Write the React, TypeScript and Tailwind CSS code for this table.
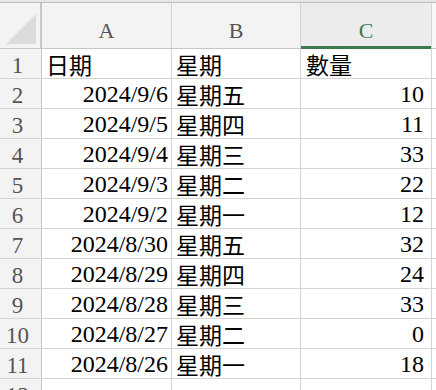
import React from "react";

const rows: [string, string, string][] = [
  ["2024/9/6", "星期五", "10"],
  ["2024/9/5", "星期四", "11"],
  ["2024/9/4", "星期三", "33"],
  ["2024/9/3", "星期二", "22"],
  ["2024/9/2", "星期一", "12"],
  ["2024/8/30", "星期五", "32"],
  ["2024/8/29", "星期四", "24"],
  ["2024/8/28", "星期三", "33"],
  ["2024/8/27", "星期二", "0"],
  ["2024/8/26", "星期一", "18"],
];

const serif = "font-['Liberation_Serif',serif]";
const cjk = "font-['Noto_Sans_CJK_TC',serif]";

function Row({ n, a, b, c, cjkA }: { n: string; a: string; b: string; c: string; cjkA?: boolean }) {
  return (
    <div className="grid grid-cols-[42px_130px_129px_131px_1fr] h-[30px] border-b border-[#d4d4d4]">
      <div className={`${serif} bg-[#f3f3f3] border-r border-[#c6c6c6] flex items-end justify-center pr-[6px] pb-[1px] text-[23px] leading-none text-[#555]`}>
        <span>{n}</span>
      </div>
      <div className={`border-r border-[#d4d4d4] flex items-end leading-none ${cjkA ? "justify-start pl-[4px] pb-[2px]" : "justify-end pr-[3px] pb-[2px]"}`}>
        {cjkA ? <span className={`${cjk} text-[23px] leading-none font-normal`}>{a}</span> : <span className={`${serif} text-[24px] leading-none`}>{a}</span>}
      </div>
      <div className="border-r border-[#d4d4d4] flex items-end pl-[4px] pb-[2px] leading-none">
        <span className={`${cjk} text-[23px] leading-none font-normal`}>{b}</span>
      </div>
      <div className={`border-r border-[#d4d4d4] flex items-end leading-none ${cjkA ? "justify-start pl-[5px] pb-[2px]" : "justify-end pr-[7px] pb-[2px]"}`}>
        {cjkA ? <span className={`${cjk} text-[23px] leading-none font-normal`}>{c}</span> : <span className={`${serif} text-[24px] leading-none`}>{c}</span>}
      </div>
      <div className="bg-white" />
    </div>
  );
}

export default function App() {
  return (
    <div className={`w-[436px] h-[390px] overflow-hidden bg-white text-black ${serif}`}>
      <div className="h-[2px] bg-[#e6e6e6]" />
      <div className="h-[1px] bg-[#bdbdbd]" />
      <div className="grid grid-cols-[42px_130px_129px_131px_1fr] h-[46px] border-b border-[#c6c6c6] bg-[#f3f3f3]">
        <div className="border-r-2 border-[#c6c6c6] relative">
          <svg className="absolute left-[6px] top-[11px]" width="30" height="30" viewBox="0 0 30 30">
            <polygon points="30,0 30,30 0,30" fill="#dcdcdc" />
          </svg>
        </div>
        <div className={`${serif} border-r border-[#d4d4d4] flex items-center justify-center pt-[10px] text-[22px] leading-none text-[#555]`}>A</div>
        <div className={`${serif} border-r border-[#d4d4d4] flex items-center justify-center pt-[10px] text-[22px] leading-none text-[#555]`}>B</div>
        <div className={`${serif} border-r border-[#d4d4d4] bg-[#ececec] relative flex items-center justify-center pt-[10px] text-[22px] leading-none text-[#3e7a4e]`}>
          C
          <div className="absolute left-0 right-0 bottom-[-1px] h-[3px] bg-[#3c7a4d]" />
        </div>
        <div className="bg-[#f8f8f8]" />
      </div>
      <Row n="1" a="日期" b="星期" c="數量" cjkA />
      {rows.map((r, i) => (
        <Row key={i} n={String(i + 2)} a={r[0]} b={r[1]} c={r[2]} />
      ))}
      <Row n="12" a="" b="" c="" cjkA />
    </div>
  );
}
